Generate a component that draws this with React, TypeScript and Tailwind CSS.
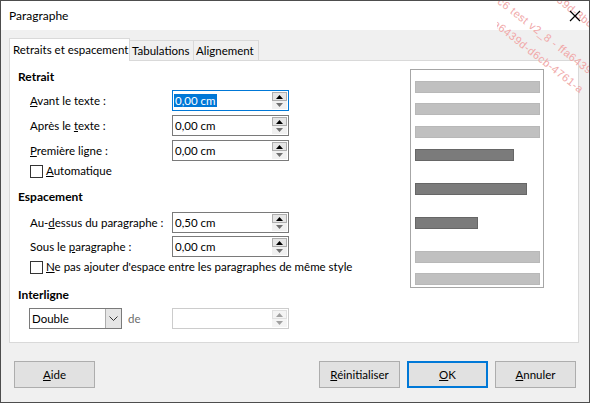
import React from "react";

// petit champ numérique avec boutons haut/bas
function Spin({ value, focused, disabled }: { value?: string; focused?: boolean; disabled?: boolean }) {
  const border = focused ? "border-[#0078d7]" : disabled ? "border-[#cccccc]" : "border-[#7a7a7a]";
  return (
    <div className={`w-[117px] h-[21px] border ${border} bg-white flex items-center justify-between pl-[1px] pr-[1px]`}>
      <span className="text-[11.5px] leading-[15px]">
        {value && (focused ? <span className="bg-[#0078d7] text-white px-[1px]">{value}</span> : <span className="px-[1px]">{value}</span>)}
      </span>
      <div className="w-[15px] h-[17px] flex flex-col">
        <div className={`h-[9px] flex items-center justify-center border ${disabled ? "border-[#e0e0e0] bg-[#f4f4f4]" : "border-[#adadad] bg-[#e5e5e5]"}`}>
          <svg width="7" height="4" viewBox="0 0 7 4"><path d="M0 4 L3.5 0 L7 4 Z" fill={disabled ? "#a0a0a0" : "#000"} /></svg>
        </div>
        <div className={`h-[8px] flex items-center justify-center ${disabled ? "bg-[#f4f4f4]" : "bg-[#f0f0f0]"}`}>
          <svg width="7" height="4" viewBox="0 0 7 4"><path d="M0 0 L3.5 4 L7 0 Z" fill={disabled ? "#a0a0a0" : "#6f6f6f"} /></svg>
        </div>
      </div>
    </div>
  );
}

function Row({ label, children }: { label: React.ReactNode; children: React.ReactNode }) {
  return (
    <div className="flex items-center h-[21px]">
      <div className="w-[142px] text-[11.5px] whitespace-nowrap">{label}</div>
      {children}
    </div>
  );
}

function Check({ children }: { children: React.ReactNode }) {
  return (
    <div className="flex items-center h-[16px] gap-[3px]">
      <div className="w-[13px] h-[13px] border border-[#333333] bg-white" />
      <span className="text-[11.5px] whitespace-nowrap">{children}</span>
    </div>
  );
}

function Btn({ children, def }: { children: React.ReactNode; def?: boolean }) {
  return (
    <div className={`w-[81px] h-[27px] flex items-center justify-center text-[11.5px] bg-[#e1e1e1] ${def ? "border-2 border-[#0078d7]" : "border border-[#adadad]"}`}>
      {children}
    </div>
  );
}

export default function App() {
  return (
    <div className="w-[590px] h-[403px] border border-[#4d4d4d] bg-[#f0f0f0] flex flex-col overflow-hidden relative text-black font-['Lato','Noto_Sans',sans-serif]">
      {/*barre de titre*/}
      <div className="h-[29px] bg-white flex items-center justify-between pl-[8px] pr-[8px] shrink-0">
        <span className="text-[12px]">Paragraphe</span>
        <svg width="12" height="12" viewBox="0 0 12 12" className="relative z-20"><path d="M1 1 L11 11 M11 1 L1 11" stroke="#000" strokeWidth="1.2" /></svg>
      </div>

      {/*onglets*/}
      <div className="flex items-end h-[30px] pt-[7px] ml-[8px] text-[11.5px]">
        <div className="w-[121px] h-[23px] bg-white border border-b-0 border-[#d9d9d9] pl-[3px] flex items-center whitespace-nowrap relative z-10 -mb-px">Retraits et espacement</div>
        <div className="w-[64px] h-[20px] border border-l-0 border-b-0 border-[#d9d9d9] pl-[2px] flex items-center whitespace-nowrap">Tabulations</div>
        <div className="w-[65px] h-[20px] border border-l-0 border-b-0 border-[#d9d9d9] pl-[2px] flex items-center whitespace-nowrap">Alignement</div>
      </div>

      {/*panneau*/}
      <div className="ml-[8px] mr-[10px] h-[283px] bg-white border border-[#d9d9d9] flex shrink-0">
        <div className="flex-1 pl-[8px] pt-[8px] flex flex-col">
          <div className="text-[12px] font-bold h-[16px] leading-[16px]">Retrait</div>
          <div className="ml-[12px] mt-[5px] flex flex-col gap-[4px]">
            <Row label={<><u>A</u>vant le texte :</>}><Spin value="0,00 cm" focused /></Row>
            <Row label={<>Après le <u>t</u>exte :</>}><Spin value="0,00 cm" /></Row>
            <Row label={<><u>P</u>remière ligne :</>}><Spin value="0,00 cm" /></Row>
          </div>
          <div className="ml-[12px] mt-[2px]"><Check><u>A</u>utomatique</Check></div>

          <div className="text-[12px] font-bold h-[16px] leading-[16px] mt-[10px]">Espacement</div>
          <div className="ml-[12px] mt-[7px] flex flex-col gap-[3px]">
            <Row label={<>Au-<u>d</u>essus du paragraphe :</>}><Spin value="0,50 cm" /></Row>
            <Row label={<>Sous le <u>p</u>aragraphe :</>}><Spin value="0,00 cm" /></Row>
          </div>
          <div className="ml-[12px] mt-[2px]"><Check><u>N</u>e pas ajouter d'espace entre les paragraphes de même style</Check></div>

          <div className="text-[12px] font-bold h-[16px] leading-[16px] mt-[12px]">Interligne</div>
          <div className="ml-[11px] mt-[5px] flex items-center h-[21px]">
            <div className="w-[93px] h-[21px] border border-[#7a7a7a] flex items-center justify-between text-[11.5px]">
              <span className="pl-[2px]">Double</span>
              <div className="w-[16px] h-full bg-[#e5e5e5] border-l border-[#adadad] flex items-center justify-center">
                <svg width="9" height="5" viewBox="0 0 9 5"><path d="M0.5 0.5 L4.5 4.5 L8.5 0.5" stroke="#333" fill="none" /></svg>
              </div>
            </div>
            <span className="text-[11.5px] text-[#6d6d6d] ml-[6px] w-[44px]">de</span>
            <Spin disabled />
          </div>
        </div>

        {/*aperçu*/}
        <div className="w-[134px] h-[219px] mt-[8px] mr-[34px] border border-[#a6a6a6] overflow-hidden pl-[4px] pr-[3px] pt-[11px] flex flex-col">
          <div className="h-[12px] bg-[#c0c0c0] border border-[#b8b8b8]" />
          <div className="h-[12px] mt-[10px] bg-[#c0c0c0] border border-[#b8b8b8]" />
          <div className="h-[12px] mt-[11px] bg-[#c0c0c0] border border-[#b8b8b8]" />
          <div className="h-[12px] w-[99px] mt-[11px] bg-[#7b7b7b] border border-[#666666]" />
          <div className="h-[12px] w-[112px] mt-[22px] bg-[#7b7b7b] border border-[#666666]" />
          <div className="h-[12px] w-[63px] mt-[22px] bg-[#7b7b7b] border border-[#666666]" />
          <div className="h-[12px] mt-[22px] bg-[#c0c0c0] border border-[#b8b8b8]" />
          <div className="h-[12px] mt-[10px] bg-[#c0c0c0] border border-[#b8b8b8] shrink-0" />
        </div>
      </div>

      {/*boutons*/}
      <div className="flex items-center justify-between ml-[13px] mr-[13px] mt-[18px]">
        <Btn><span><u>A</u>ide</span></Btn>
        <div className="flex gap-[7px]">
          <Btn><span><u>R</u>éinitialiser</span></Btn>
          <Btn def><span><u>O</u>K</span></Btn>
          <Btn><span><u>A</u>nnuler</span></Btn>
        </div>
      </div>

      {/*filigrane*/}
      <div className="absolute top-0 right-0 w-[92px] h-[110px] overflow-hidden pointer-events-none text-[11px] leading-[12px] tracking-[0.5px] text-[#f0a8a8] font-['Liberation_Sans',sans-serif]">
        <span className="absolute left-[44px] top-[-24px] rotate-[38deg] origin-top-left whitespace-nowrap">ffa6439d-3bd701c6 test</span>
        <span className="absolute left-[6px] top-[-6px] rotate-[38deg] origin-top-left whitespace-nowrap">c6 test v2_8 - ffa6439d</span>
        <span className="absolute left-[-4px] top-[12px] rotate-[38deg] origin-top-left whitespace-nowrap">ffa6439d-d6cb-4761-a</span>
      </div>
    </div>
  );
}
